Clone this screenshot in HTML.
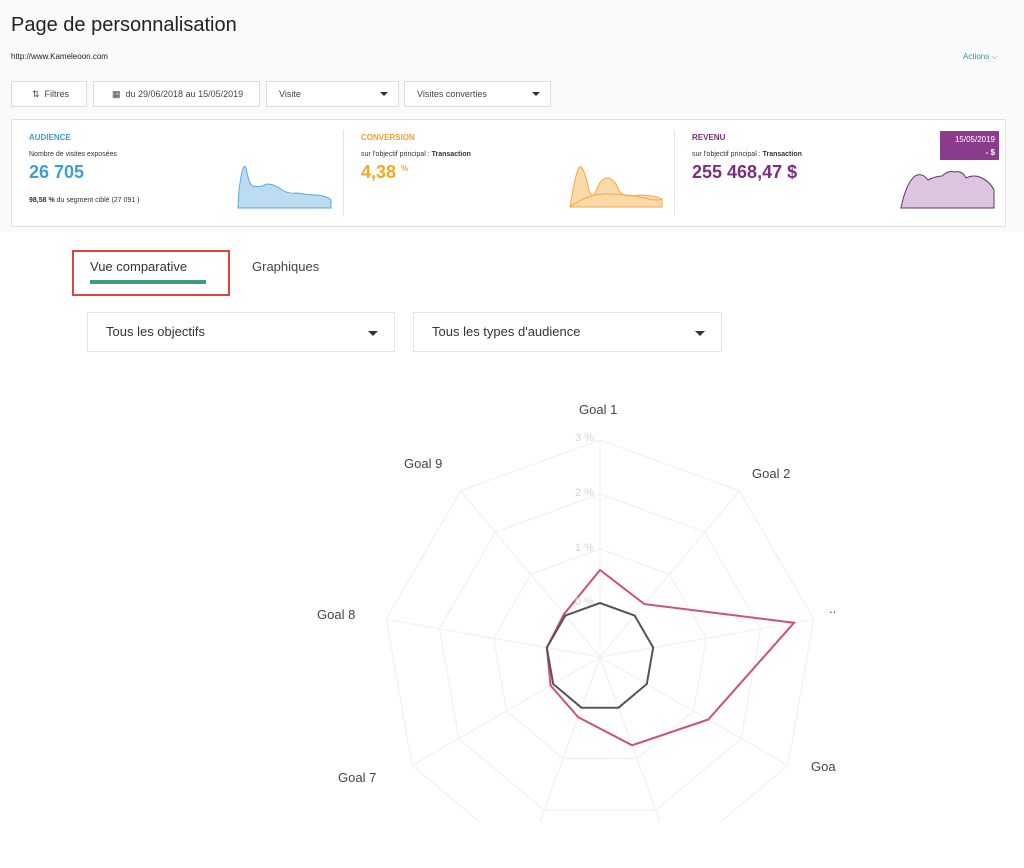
<!DOCTYPE html>
<html><head><meta charset="utf-8"><style>
*{box-sizing:border-box;margin:0;padding:0}
body{width:1024px;height:868px;overflow:hidden;background:#fafafc;font-family:"Liberation Sans",sans-serif;color:#333;position:relative}
.a{position:absolute}
.btn{position:absolute;top:81px;height:26px;background:#fff;border:1px solid #dcdbe0;font-size:9px;color:#444;line-height:24px}
.caret{position:absolute;right:10px;top:10px;width:0;height:0;border-left:4px solid transparent;border-right:4px solid transparent;border-top:4px solid #333}
.card{position:absolute;left:11px;top:119px;width:995px;height:108px;background:#fff;border:1px solid #e2e0e6}
.lab{font-size:8px;font-weight:bold}
.sm{font-size:7px;color:#333}
.big{font-size:18px;font-weight:bold}
.dd{position:absolute;top:312px;height:40px;background:#fff;border:1px solid #e4e3e8;font-size:13px;color:#333;line-height:38px;padding-left:18px}
.dd .caret{top:18px;right:16px;border-left-width:5px;border-right-width:5px;border-top-width:5px}
.gl{position:absolute;font-size:13px;color:#444}
</style></head><body>
<div class="a" style="left:11px;top:14px;font-size:20px;color:#222">Page de personnalisation</div>
<div class="a" style="left:11px;top:52px;font-size:8px;color:#222">http://www.Kameleoon.com</div>
<div class="a" style="left:963px;top:52px;font-size:8px;color:#3a9a7a">Actions ⌵</div>

<div class="btn" style="left:11px;width:76px;padding-left:20px">⇅&nbsp; Filtres</div>
<div class="btn" style="left:93px;width:167px;padding-left:18px">▦&nbsp; du 29/06/2018 au 15/05/2019</div>
<div class="btn" style="left:266px;width:133px;padding-left:12px">Visite<span class="caret"></span></div>
<div class="btn" style="left:404px;width:147px;padding-left:12px">Visites converties<span class="caret"></span></div>

<div class="card">
 <div class="a lab" style="left:17px;top:13px;color:#3a9fd6">AUDIENCE</div>
 <div class="a sm" style="left:17px;top:31px">Nombre de visites exposées</div>
 <div class="a big" style="left:17px;top:42px;color:#3a9fd6">26 705</div>
 <div class="a sm" style="left:17px;top:77px"><b>98,58 %</b> du segment ciblé (27 091 )</div>
 <svg class="a" style="left:225px;top:40px" width="95" height="50"><path d="M1 48 L2 30 Q6 0 9 8 Q12 25 16 26 Q22 28 30 24 Q38 24 45 30 Q52 34 60 33 Q70 35 80 35 Q90 36 94 40 L94 48Z" fill="#bcdcf2" stroke="#5aa8dc" stroke-width="1"/></svg>
 <div class="a" style="left:331px;top:10px;width:1px;height:85px;background:#e4e3e8"></div>
 <div class="a lab" style="left:349px;top:13px;color:#f0a030">CONVERSION</div>
 <div class="a sm" style="left:349px;top:31px">sur l'objectif principal : <b>Transaction</b></div>
 <div class="a big" style="left:349px;top:42px;color:#f5a623">4,38 <sup style="font-size:8px">%</sup></div>
 <svg class="a" style="left:557px;top:43px" width="95" height="46"><path d="M1 44 Q8 0 12 4 Q17 10 20 28 Q24 36 27 28 Q32 14 40 15 Q47 18 50 28 Q55 35 70 32 Q85 32 93 36 L93 44Z" fill="#fbd9a8" stroke="#f2a84a"/><path d="M1 44 Q20 30 40 31 Q60 31 80 36 Q90 38 93 36" fill="none" stroke="#f2a84a"/></svg>
 <div class="a" style="left:662px;top:10px;width:1px;height:85px;background:#e4e3e8"></div>
 <div class="a lab" style="left:680px;top:13px;color:#7b2f7b">REVENU</div>
 <div class="a sm" style="left:680px;top:31px">sur l'objectif principal : <b>Transaction</b></div>
 <div class="a big" style="left:680px;top:42px;color:#7b2f7b">255 468,47 $</div>
 <svg class="a" style="left:888px;top:48px" width="96" height="42"><path d="M1 40 Q6 15 15 8 Q22 4 28 12 Q36 8 42 8 Q48 2 55 4 Q62 2 66 10 Q74 6 82 10 Q90 14 94 22 L94 40Z" fill="#dcc6df" stroke="#6a2f6a"/></svg>
 <div class="a" style="left:928px;top:11px;width:59px;height:29px;background:#8c3c8c;color:#fff;font-size:8px;text-align:right;padding:2px 4px;line-height:13px">15/05/2019<br><b>- $</b></div>
</div>

<div class="a" style="left:0;top:232px;width:1024px;height:636px;background:#fff"></div>
<div class="a" style="left:72px;top:250px;width:158px;height:46px;border:2px solid #d9463b"></div>
<div class="a" style="left:90px;top:259px;font-size:13px;color:#333">Vue comparative</div>
<div class="a" style="left:90px;top:280px;width:116px;height:4px;background:#3f9a80"></div>
<div class="a" style="left:252px;top:259px;font-size:13px;color:#444">Graphiques</div>

<div class="dd" style="left:87px;width:308px">Tous les objectifs<span class="caret"></span></div>
<div class="dd" style="left:413px;width:309px">Tous les types d'audience<span class="caret"></span></div>

<svg class="a" id="r" style="left:0;top:0" width="1024" height="822"></svg>
<div class="gl" style="left:579px;top:402px">Goal 1</div>
<div class="gl" style="left:752px;top:466px">Goal 2</div>
<div class="gl" style="left:829px;top:601px">..</div>
<div class="gl" style="left:811px;top:759px">Goa</div>
<div class="gl" style="left:338px;top:770px">Goal 7</div>
<div class="gl" style="left:317px;top:607px">Goal 8</div>
<div class="gl" style="left:404px;top:456px">Goal 9</div>
<div class="gl" style="left:575px;top:432px;font-size:11px;color:#d4d4d8">3 %</div>
<div class="gl" style="left:575px;top:487px;font-size:11px;color:#d4d4d8">2 %</div>
<div class="gl" style="left:575px;top:542px;font-size:11px;color:#d4d4d8">1 %</div>
<div class="gl" style="left:575px;top:596px;font-size:11px;color:#d4d4d8">0 %</div>
<script>
var cx=600,cy=657,s='';
function pts(rs){return rs.map(function(r,i){var a=i*40*Math.PI/180;return (cx+r*Math.sin(a)).toFixed(1)+','+(cy-r*Math.cos(a)).toFixed(1)}).join(' ')}
[54,108,163,217].forEach(function(r){s+='<polygon points="'+pts([r,r,r,r,r,r,r,r,r])+'" fill="none" stroke="#f2eff5" stroke-width="1.2"/>'});
for(var i=0;i<9;i++){var a=i*40*Math.PI/180;s+='<line x1="'+cx+'" y1="'+cy+'" x2="'+(cx+217*Math.sin(a))+'" y2="'+(cy-217*Math.cos(a))+'" stroke="#f2eff5" stroke-width="1.2"/>'}
s+='<polygon points="'+pts([87,69,197,125,94,64,57,54,56])+'" fill="none" stroke="#d0506e" stroke-width="2"/>';
s+='<polygon points="'+pts([54,54,54,54,54,54,54,54,54])+'" fill="none" stroke="#555" stroke-width="2"/>';
document.getElementById('r').innerHTML=s;
</script>
</body></html>
